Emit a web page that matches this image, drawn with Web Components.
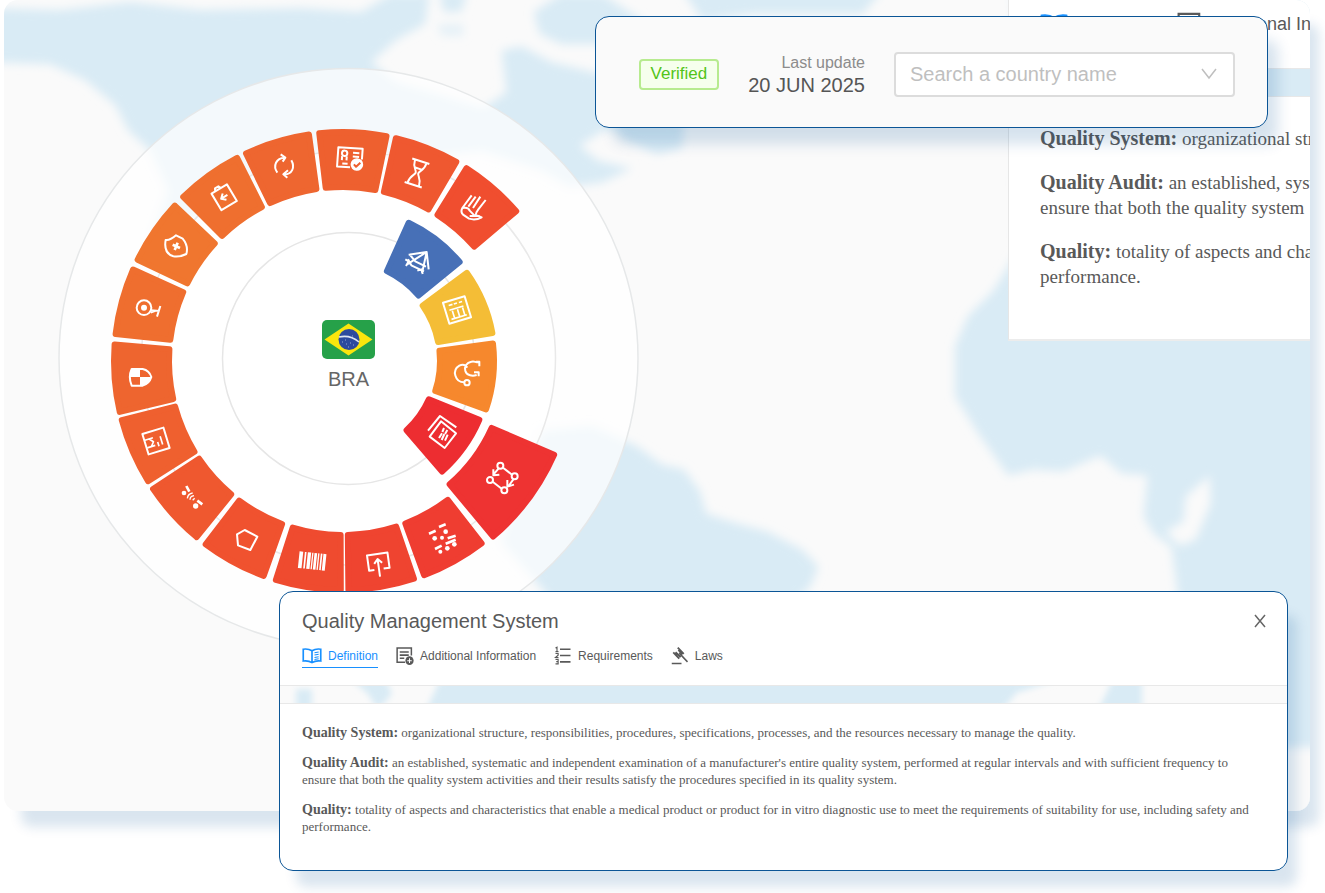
<!DOCTYPE html>
<html lang="en">
<head>
<meta charset="utf-8">
<meta name="viewport" content="width=device-width, initial-scale=1">
<title>Country regulatory profile</title>
<style>
  body { margin: 0; background: #fff; color: #595959; font-family: "Liberation Sans", Arial, sans-serif; }
</style>
</head>
<body>
<profile-scene>
  <app-panel slot="app">
    <category-wheel slot="wheel" code="BRA"></category-wheel>
    <side-detail slot="side"></side-detail>
  </app-panel>
  <status-card slot="status" date="20 JUN 2025"></status-card>
  <detail-dialog slot="dialog" heading="Quality Management System">
    <definition-entry term="Quality System:">organizational structure, responsibilities, procedures, specifications, processes, and the resources necessary to manage the quality.</definition-entry>
    <definition-entry term="Quality Audit:">an established, systematic and independent examination of a manufacturer's entire quality system, performed at regular intervals and with sufficient frequency to ensure that both the quality system activities and their results satisfy the procedures specified in its quality system.</definition-entry>
    <definition-entry term="Quality:">totality of aspects and characteristics that enable a medical product or product for in vitro diagnostic use to meet the requirements of suitability for use, including safety and performance.</definition-entry>
  </detail-dialog>
</profile-scene>

<script>
const define = (name, render, after) => customElements.define(name, class extends HTMLElement {
  connectedCallback() {
    if (this.shadowRoot) return;
    this.attachShadow({ mode: "open" }).innerHTML = render(this);
    if (after) after(this.shadowRoot, this);
  }
});

/* Page frame: the application panel with two cards floating over it */
define("profile-scene", () => `
  <style>
    :host { display: block; position: relative; overflow: hidden; padding: 0 15px 82px 4px; }
    ::slotted(status-card) { position: absolute; top: 16px; right: 57px; }
    ::slotted(detail-dialog) { position: absolute; top: 591px; left: 279px; right: 37px; }
  </style>
  <slot name="app"></slot><slot name="status"></slot><slot name="dialog"></slot>`);

define("app-panel", () => `
  <style>
    :host { display: block; border-radius: 14px; box-shadow: 13px 20px 12px -4px rgba(0, 80, 150, .15); }
    .frame { position: relative; border-radius: 14px; overflow: hidden; background: #fafafa; }
    map-backdrop { position: absolute; inset: 0; }
    .row { position: relative; display: flex; justify-content: space-between; align-items: flex-start; }
    .wheel { padding: 67px 0 162px 54px; }
    .side { flex: 0 0 302px; min-width: 0; }
  </style>
  <div class="frame">
    <map-backdrop></map-backdrop>
    <div class="row">
      <div class="wheel"><slot name="wheel"></slot></div>
      <div class="side"><slot name="side"></slot></div>
    </div>
  </div>`);

/* Softened land masses behind the wheel */
define("map-backdrop", () => `
  <style>:host { display: block; overflow: hidden; } svg { display: block; }</style>
  <svg width="1310" height="811" viewBox="4 0 1306 811" preserveAspectRatio="xMinYMin slice" aria-hidden="true">
    <defs><filter id="soft" x="-5%" y="-5%" width="110%" height="110%"><feGaussianBlur stdDeviation="5"/></filter></defs>
    <g filter="url(#soft)" fill="#d9ebf5">
      <path d="M-10 8 L60 10 L130 2 L200 10 L300 8 L360 12 L390 -6 L428 -6 L424 24 L395 40 L370 62 L395 82 L440 95 L482 108 L505 92 L500 50 L520 46 L550 62 L600 74 L660 70 L660 130 L602 130 L578 145 L596 160 L630 168 L600 182 L568 186 L540 170 L480 150 L400 160 L330 150 L230 200 L150 240 L168 190 L150 150 L128 130 L115 105 L85 80 L50 64 L-10 62 Z"/>
      <path d="M438 -8 H466 L460 12 H442 Z M532 12 L560 -6 H600 L640 20 V44 H560 L538 34 Z"/>
      <path d="M680 -10 H880 L860 14 L750 14 L700 20 Z"/>
      <path d="M600 120 H682 L680 148 L655 154 L625 140 Z"/>
      <path fill-opacity=".6" d="M436 24 H462 V36 H440 Z"/>
      <path d="M540 430 L590 425 L635 445 L660 463 L682 468 L698 490 L704 512 L735 522 L765 530 L800 548 L816 565 L808 585 L780 610 L560 610 L500 540 Z"/>
      <path d="M1015 250 L990 290 L965 315 L952 345 L952 395 L975 432 L1005 474 L1030 468 L1060 470 L1097 454 L1118 472 L1144 474 L1140 515 L1150 532 L1168 545 L1175 600 L1180 830 H1330 V-10 H1010 Z"/>
    </g>
    <g filter="url(#soft)" fill="#fafafa">
      <path d="M1206 474 L1182 495 L1180 520 L1162 530 L1176 544 L1192 538 L1207 502 Z"/>
      <path d="M1270 745 H1330 V830 H1270 Z"/>
    </g>
  </svg>`);

/* Ring segments: from/to are degrees clockwise from east, r0/r1 the radii.
   Icons are drawn at three times their size round the point "at". */
const ORIGIN = [343, 361];
const segments = [
  { from: -65.7, to: -39.2, r0: 97, r1: 156, fill: "#4770b7", at: [418, 262],
    icon: `<path d="M-28 -22L26 -30L32 22 M26 -30L-34 8 M26 -30L12 34 M-26 -24L-8 -2L24 14 M-30 -8L-20 10L18 28 M-38 -8L-28 -2L-36 12 M-2 26L10 22L14 36"/>` },
  { from: -36.6, to: -9.5, r0: 94, r1: 155, fill: "#f4bd36", at: [457, 310],
    icon: `<g transform="rotate(-17)"><path d="M-34 -33H34V33H-34Z"/><path stroke-width="5" d="M-20 -20H-8 M-4 -20H6 M12 -20H22 M-22 -6H22 M-14 -2V20 M2 -2V20 M18 -2V20 M-24 22H24"/></g>` },
  { from: -7.8, to: 19.8, r0: 94, r1: 154, fill: "#f6882d", at: [466, 373],
    icon: `<circle cx="3" cy="29" r="8"/><path d="M-6 28C-32 28 -44 -8 -20 -22C-8 -28 0 -22 4 -16 M38 -32C26 -32 28 -36 16 -34C2 -32 -6 -18 -2 -6C2 8 20 10 32 6 M30 -34H40V-20 M24 -2H38V10"/>` },
  { from: 22.2, to: 49.3, r0: 91, r1: 151.5, fill: "#ed2d31", at: [443, 432],
    icon: `<path d="M-45 -4L-9 -48L40 -14 M-6 -32L39 4L5 48L-40 14Z"/><path stroke-width="6" d="M-3 4L-12 18 M3 -12L-2 0 M4 6L-4 24 M13 -6L6 6 M14 8L6 26"/>` },
  { from: 23.2, to: 50.2, r0: 160, r1: 234, fill: "#ee3332", at: [502, 478],
    icon: `<circle cx="-5" cy="-37" r="9"/><circle cx="38" cy="-5" r="9"/><circle cx="7" cy="37" r="9"/><circle cx="-36" cy="6" r="9"/><path d="M3 -31L30 -10 M-28 11L-1 32 M-10 -29L-26 -10 M-26 -26V-8L-8 -10 M34 4L20 24 M16 6V26L36 20"/>` },
  { from: 52, to: 70, fill: "#ef3d31", at: [443, 539],
    icon: `<path stroke-width="8" d="M-42 -16L-22 -25 M-12 -36L8 -44 M-24 30L-4 20 M14 -2L38 -10 M8 14L38 2"/><g class="solid"><circle cx="-25" cy="-2" r="7"/><circle cx="8" cy="-22" r="7"/><circle cx="-3" cy="-4" r="6"/><circle cx="-8" cy="38" r="6"/><circle cx="13" cy="28" r="7"/><circle cx="34" cy="16" r="7"/></g>` },
  { from: 71.2, to: 89.4, fill: "#ef4430", at: [378, 562],
    icon: `<g transform="rotate(-8)"><path d="M-14 22H-30V-24H32V22H14 M0 44V-8 M-12 4L0 -9L12 4"/></g>` },
  { from: 89.8, to: 107.8, fill: "#ef4b2f", at: [312, 561],
    icon: `<g class="solid" transform="rotate(6)"><path d="M-40 -25h11v50h-11z M-24 -25h5v50h-5z M-15 -25h10v50h-10z M-2 -25h4v50h-4z M5 -25h8v50h-8z M16 -25h4v50h-4z M24 -25h5v50h-5z M32 -25h9v50h-9z"/></g>` },
  { from: 109.5, to: 127.6, fill: "#f0522f", at: [247, 540],
    icon: `<path d="M-7 -30L31 -10L10 30L-27 16L-30 -17Z"/>` },
  { from: 129, to: 146.8, fill: "#ef582f", at: [192, 497],
    icon: `<g class="solid"><circle cx="-24" cy="-12" r="7"/><circle cx="11" cy="27" r="8"/></g><path stroke-width="8" d="M-17 -33L-8 -16 M16 11L31 22"/><path stroke-width="4" d="M-14 4Q-12 -10 2 -12 M-6 8Q-6 -2 6 -4 M2 10L8 4"/>` },
  { from: 147.6, to: 165.8, fill: "#ef602f", at: [156, 441],
    icon: `<g transform="rotate(-17)"><path d="M-33 -32H33V32H-33Z"/><path stroke-width="5" d="M-31 -12H-6 M-31 12H-6 M-18 -12L-8 0L-18 12 M4 4V18 M16 -10V16"/></g>` },
  { from: 166.4, to: 184.9, fill: "#ee652f", at: [140, 377],
    icon: `<path d="M-25 -24H8Q28 -20 34 0Q28 20 8 26H-25Q-36 0 -25 -24Z"/><path class="solid" d="M-25 -24H0V0H-32Z M0 0H34Q28 20 8 26H0Z"/>` },
  { from: 186, to: 204.3, fill: "#ef6e2f", at: [148, 308],
    icon: `<circle cx="-12" cy="-1" r="22"/><circle class="solid" cx="-12" cy="-1" r="9"/><path d="M9 7L34 9 M8 14L24 8 M37 -6L27 26"/>` },
  { from: 205.5, to: 223.5, fill: "#f0762f", at: [176, 246],
    icon: `<path d="M0 -32Q-18 -16 -31 -18Q-38 22 -8 31Q12 34 31 24Q38 0 20 -22Z"/><path stroke-width="8" d="M-10 -4L12 6 M5 -10L-4 12"/>` },
  { from: 225, to: 243.2, fill: "#ef6f2f", at: [224, 197],
    icon: `<g transform="rotate(-31)"><path d="M-27 -28H27V30H-27Z M-14 -28L-10 -36H2L6 -28 M12 0H-8 M2 -11L-10 0L2 11"/></g>` },
  { from: 244.2, to: 262.2, fill: "#ee6630", at: [284, 166],
    icon: `<path d="M-20 20C-34 0 -24 -24 2 -25 M-10 -35L4 -25L-4 -13 M22 -17C34 4 24 26 0 25 M12 13L-2 25L10 35"/>` },
  { from: 263.3, to: 281.7, fill: "#ee602f", at: [350, 158],
    icon: `<g transform="rotate(4)"><path d="M36 2V-30H-37V28H2 M8 -16H27 M8 -5H27 M-22 18H-6"/><circle cx="-17" cy="-13" r="8"/><path d="M-24 -4V8 M-10 -4V8"/><circle class="solid" cx="22" cy="18" r="19"/><path stroke="#ee602f" d="M13 18L20 25L32 12"/></g>` },
  { from: 282.6, to: 300.4, fill: "#ef5830", at: [417, 173],
    icon: `<g transform="rotate(18)"><path d="M-27 -37H27 M-27 37H27 M-18 -36C-18 -12 -4 -8 -4 0C-4 8 -18 12 -18 36 M18 -36C18 -12 4 -8 4 0C4 8 18 12 18 36 M-10 -14H10"/></g>` },
  { from: 301.9, to: 319.9, fill: "#f04e2f", at: [473, 208],
    icon: `<path d="M-4 -38L-32 0Q-38 12 -30 20L-12 32Q8 38 26 28L12 22 M8 -34L-14 -4 M22 -34L0 0 M38 -24L16 4Q8 14 8 22 M-32 0Q-14 -4 -10 8L4 22 M-10 24H20"/>` },
];

const polar = (r, a) => [ORIGIN[0] + r * Math.cos(a), ORIGIN[1] + r * Math.sin(a)].map(n => n.toFixed(2)).join(" ");
function segmentPath({ from, to, r0 = 171, r1 = 232 }) {
  const inset = 3, a = from * Math.PI / 180, b = to * Math.PI / 180;
  const ri = r0 + inset, ro = r1 - inset;
  return `M${polar(ri, a + inset / ri)}L${polar(ro, a + inset / ro)}A${ro} ${ro} 0 0 1 ${polar(ro, b - inset / ro)}L${polar(ri, b - inset / ri)}A${ri} ${ri} 0 0 0 ${polar(ri, a + inset / ri)}Z`;
}

define("category-wheel", host => `
  <style>
    :host { display: grid; place-items: center; }
    svg, .country { grid-area: 1 / 1; }
    .country { display: flex; flex-direction: column; align-items: center; gap: 8px; padding-bottom: 6px; }
    .country span { font-size: 20px; line-height: 24px; color: #666; }
    .icon { fill: none; stroke: #fff; stroke-width: 6; stroke-linejoin: round; }
    .icon .solid { fill: #fff; stroke: none; }
  </style>
  <svg width="581" height="582" viewBox="58 67 581 582" role="img" aria-label="Regulatory categories">
    <circle cx="348.5" cy="358" r="289.5" fill="#fff" fill-opacity=".7" stroke="#e6e8e9" stroke-width="1.5"/>
    <circle cx="348.5" cy="358" r="207" fill="#fff" fill-opacity=".6" stroke="#e9e9e9" stroke-width="1.5"/>
    <circle cx="348.5" cy="358.5" r="126" fill="#fff" fill-opacity=".6" stroke="#e6e6e6" stroke-width="1.5"/>
    ${segments.map(s => `<path d="${segmentPath(s)}" fill="${s.fill}" stroke="${s.fill}" stroke-width="6" stroke-linejoin="round"/>
      <g class="icon" transform="translate(${s.at}) scale(.3333)">${s.icon}</g>`).join("")}
  </svg>
  <div class="country">
    <svg width="53" height="39" viewBox="0 0 53 39" role="img" aria-label="Flag of Brazil">
      <rect width="53" height="39" rx="5" fill="#26a149"/>
      <path d="M2.500 19.500L26.500 3.500L50.500 19.500L26.500 35.500Z" fill="#fae60d"/>
      <circle cx="27" cy="19.500" r="10.500" fill="#2c4a9e"/>
      <path d="M17 17Q28 14.500 37 22" fill="none" stroke="#dfe6f2" stroke-width="1.600"/>
      <path d="M20 22h1M24 24h1M28 23h1M26 27h1M31 25h1M23 20h1M30 16h1" stroke="#93a6d4"/>
    </svg>
    <span>${host.getAttribute("code")}</span>
  </div>`);

/* Tab with an icon; --tab-size and the --icon variables set its scale */
const tabIcons = {
  book: `<path d="M12 6C9 4 5 3.500 1.500 4V19C5 18.500 9 19 12 21C15 19 19 18.500 22.500 19V4C19 3.500 15 4 12 6ZM12 6V21"/><path stroke-width="1.300" d="M15 8.500L20 7.500M15 11.500L20 10.500M15 14.500L20 13.500M15 17L20 16"/>`,
  note: `<path d="M12 20.500H1.500V2.500H20.500V12M5 7.500H17M5 11.500H17M5 15.500H11"/><circle cx="18" cy="18.500" r="5.500" fill="currentColor" stroke="none"/><path stroke="#fff" stroke-width="1.300" d="M18 15.500V21.500M15 18.500H21"/>`,
  list: `<path d="M8 4H22M8 12H22M8 20H22"/><path stroke-width="1.500" d="M2 2.500L4 1.500V7M2 7H6M2 9.500H5.500V11.500L2 14.500H6M2 17H5.500V22.500H2M3 19.700H5.500"/>`,
  gavel: `<path d="M1 22H14M11 9L22 20"/><path stroke-width="2.500" d="M3 8L11 16M9 2L17 10M6 8L13 14M10 5L15 11"/>`
};
define("detail-tab", host => `
  <style>
    :host { display: block; }
    button { all: unset; box-sizing: border-box; display: flex; align-items: center; gap: var(--tab-gap, 6px); height: var(--tab-height, 24px);
      font-size: var(--tab-size, 12px); color: #595959; white-space: nowrap; cursor: pointer; border-bottom: 1px solid transparent; }
    :host([selected]) button { color: #1890ff; border-color: #1890ff; }
    svg { flex: none; width: var(--icon-width, 18px); height: var(--icon-height, 19px); fill: none; stroke: currentColor; stroke-width: 2; }
    :host([icon="book"]) svg { width: var(--book-width, 20px); }
  </style>
  <button type="button" role="tab" aria-selected="${host.hasAttribute("selected")}">
    <svg viewBox="0 0 24 24" preserveAspectRatio="none" aria-hidden="true">${tabIcons[host.getAttribute("icon")]}</svg><slot></slot>
  </button>`);

define("definition-entry", host => `
  <style>
    :host { display: block; font-family: "Liberation Serif", "Times New Roman", serif; font-size: var(--def-size, 13px); line-height: var(--def-line, 17px); color: #595959; }
    p { margin: 0; }
    b { font-size: var(--def-term, 14px); line-height: 1; }
  </style>
  <p><b>${host.getAttribute("term")}</b> <slot></slot></p>`);

/* Detail column at the panel's right edge, clipped by the panel */
define("side-detail", () => `
  <style>
    :host { display: block; overflow: hidden; white-space: nowrap; --tab-size: 18px; --icon-width: 26px; --icon-height: 28px; --book-width: 28px; --tab-gap: 9px; --tab-height: 36px; --def-size: 19px; --def-line: 25px; --def-term: 20px; }
    header, section { background: #fff; border-left: 1px solid #e6e6e6; }
    header { display: flex; gap: 25px; padding: 7px 0 25px 31px; border-bottom: 1px solid #e8e8e8; }
    section { display: flex; flex-direction: column; gap: 19px; margin-top: 27px; padding: 29px 0 50px 31px; border-top: 1px solid #e8e8e8; border-bottom: 2px solid #ececec; }
  </style>
  <header role="tablist">
    <detail-tab icon="book" selected>Definition</detail-tab>
    <detail-tab icon="note">Additional Information</detail-tab>
  </header>
  <section>
    <definition-entry term="Quality System:">organizational structure</definition-entry>
    <definition-entry term="Quality Audit:">an established, systematic<br>ensure that both the quality system</definition-entry>
    <definition-entry term="Quality:">totality of aspects and characteristics<br>performance.</definition-entry>
  </section>`);

define("status-card", host => `
  <style>
    :host { box-sizing: border-box; display: flex; align-items: center; height: 112px; padding: 0 32px 0 43px; background: #fafafa;
      border: 1px solid #0b5596; border-radius: 14px; box-shadow: 14px 20px 14px -4px rgba(0, 80, 150, .16); }
    .tag { box-sizing: border-box; height: 31px; padding: 0 10px; margin-bottom: -4px; border: 2px solid #b7eb8f; border-radius: 4px; background: #f6ffed; color: #52c41a; font-size: 17px; line-height: 26px; }
    .update { margin: 3px 29px 0; text-align: right; color: #555; font-size: 20px; line-height: 22px; }
    .update small { display: block; color: #8c8c8c; font-size: 16px; }
    .pick { position: relative; display: block; margin-top: 4px; }
    select { appearance: none; box-sizing: border-box; width: 341px; height: 45px; padding: 0 14px; border: 2px solid #dcdcdc; border-radius: 4px; background: #fff; color: #bfbfbf; font: 20px "Liberation Sans", Arial, sans-serif; }
    svg { position: absolute; right: 18px; top: 16px; pointer-events: none; }
  </style>
  <span class="tag">Verified</span>
  <div class="update"><small>Last update</small><time datetime="2025-06-20">${host.getAttribute("date")}</time></div>
  <label class="pick">
    <select aria-label="Search a country name"><option>Search a country name</option></select>
    <svg width="16" height="12" viewBox="0 0 16 12" fill="none" stroke="#bfbfbf" stroke-width="1.500" aria-hidden="true"><path d="M1 1L8 10L15 1"/></svg>
  </label>`);

define("detail-dialog", host => `
  <style>
    :host { display: block; border-radius: 14px; box-shadow: 13px 20px 12px -4px rgba(0, 80, 150, .15); }
    .card { border: 1px solid #0b5596; border-radius: 14px; overflow: hidden; background: #fff; }
    header { display: grid; grid-template-columns: 1fr auto; gap: 11px 0; padding: 17px 20px 17px 22px; border-bottom: 1px solid #e8e8e8; }
    h2 { margin: 0; font-size: 20px; font-weight: 400; line-height: 24px; }
    nav { grid-column: 1 / -1; display: flex; gap: 18px; }
    button { all: unset; display: grid; place-items: center; width: 14px; cursor: pointer; }
    .strip { display: block; width: 100%; height: 17px; background: #fafafa; }
    section { display: flex; flex-direction: column; gap: 13px; padding: 20px 22px 35px; border-top: 1px solid #e8e8e8; }
  </style>
  <div class="card" role="dialog" aria-label="${host.getAttribute("heading")}">
    <header>
      <h2>${host.getAttribute("heading")}</h2>
      <button type="button" aria-label="Close"><svg width="14" height="14" viewBox="0 0 14 14" fill="none" stroke="#666" stroke-width="1.500"><path d="M2 1L12 13M12 1L2 13"/></svg></button>
      <nav role="tablist">
        <detail-tab icon="book" selected>Definition</detail-tab>
        <detail-tab icon="note">Additional Information</detail-tab>
        <detail-tab icon="list">Requirements</detail-tab>
        <detail-tab icon="gavel">Laws</detail-tab>
      </nav>
    </header>
    <svg class="strip" viewBox="0 0 1007 17" preserveAspectRatio="none" aria-hidden="true">
      <defs><filter id="haze"><feGaussianBlur stdDeviation="3"/></filter></defs>
      <g fill="#d9ebf5" filter="url(#haze)"><path d="M16 3H32V24H16ZM72 -6H106L112 8L98 24L88 8ZM160 -6H748L722 24H146Z M832 -6H862V24H818L828 4Z" /><path d="M722 -6H776L740 6Z"/></g>
    </svg>
    <section><slot></slot></section>
  </div>`);
</script>
</body>
</html>
